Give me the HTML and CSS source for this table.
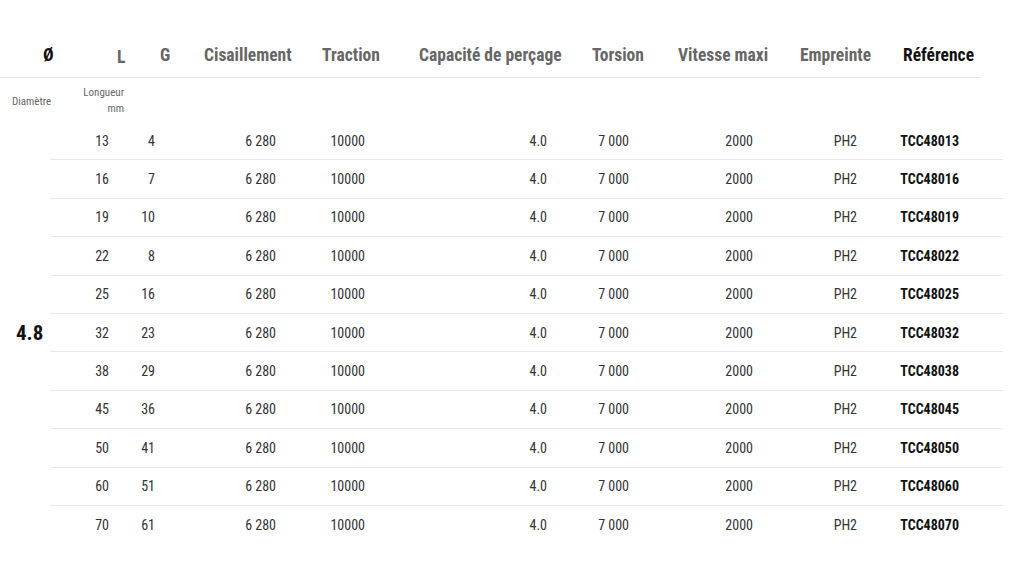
FILE: index.html
```html
<!DOCTYPE html>
<html lang="fr">
<head>
<meta charset="utf-8">
<link rel="stylesheet" href="styles.css">
</head>
<body>
<div class="page">
  <div class="head">
    <div class="h h-dia">Ø</div>
    <div class="h h-l">L</div>
    <div class="h">G</div>
    <div class="h">Cisaillement</div>
    <div class="h">Traction</div>
    <div class="h">Capacité de perçage</div>
    <div class="h">Torsion</div>
    <div class="h">Vitesse maxi</div>
    <div class="h">Empreinte</div>
    <div class="h h-ref">Référence</div>
  </div>
  <div class="body">
    <div class="sub-dia">Diamètre</div>
    <div class="sub-len">Longueur<br>mm</div>
    <div class="dia">4.8</div>
    <div class="rows">
      <div class="row"><span>13</span><span>4</span><span>6 280</span><span>10000</span><span>4.0</span><span>7 000</span><span>2000</span><span>PH2</span><span class="ref">TCC48013</span></div>
      <div class="row"><span>16</span><span>7</span><span>6 280</span><span>10000</span><span>4.0</span><span>7 000</span><span>2000</span><span>PH2</span><span class="ref">TCC48016</span></div>
      <div class="row"><span>19</span><span>10</span><span>6 280</span><span>10000</span><span>4.0</span><span>7 000</span><span>2000</span><span>PH2</span><span class="ref">TCC48019</span></div>
      <div class="row"><span>22</span><span>8</span><span>6 280</span><span>10000</span><span>4.0</span><span>7 000</span><span>2000</span><span>PH2</span><span class="ref">TCC48022</span></div>
      <div class="row"><span>25</span><span>16</span><span>6 280</span><span>10000</span><span>4.0</span><span>7 000</span><span>2000</span><span>PH2</span><span class="ref">TCC48025</span></div>
      <div class="row"><span>32</span><span>23</span><span>6 280</span><span>10000</span><span>4.0</span><span>7 000</span><span>2000</span><span>PH2</span><span class="ref">TCC48032</span></div>
      <div class="row"><span>38</span><span>29</span><span>6 280</span><span>10000</span><span>4.0</span><span>7 000</span><span>2000</span><span>PH2</span><span class="ref">TCC48038</span></div>
      <div class="row"><span>45</span><span>36</span><span>6 280</span><span>10000</span><span>4.0</span><span>7 000</span><span>2000</span><span>PH2</span><span class="ref">TCC48045</span></div>
      <div class="row"><span>50</span><span>41</span><span>6 280</span><span>10000</span><span>4.0</span><span>7 000</span><span>2000</span><span>PH2</span><span class="ref">TCC48050</span></div>
      <div class="row"><span>60</span><span>51</span><span>6 280</span><span>10000</span><span>4.0</span><span>7 000</span><span>2000</span><span>PH2</span><span class="ref">TCC48060</span></div>
      <div class="row"><span>70</span><span>61</span><span>6 280</span><span>10000</span><span>4.0</span><span>7 000</span><span>2000</span><span>PH2</span><span class="ref">TCC48070</span></div>
    </div>
  </div>
</div>
</body>
</html>
```
FILE: styles.css
```css
html, body {
  margin: 0;
  padding: 0;
  background: #ffffff;
}
body {
  font-family: "Roboto Condensed", "Liberation Sans Narrow", "Roboto", sans-serif;
  color: #333333;
}
.page {
  width: 1024px;
  padding-top: 32px;
}
.head {
  width: 980px;
  display: grid;
  grid-template-columns: 43px 74px 43px 44px 118px 97px 173px 86px 122px 103px 77px;
  align-items: center;
  height: 45px;
  border-bottom: 1px solid #e6e6e6;
  font-size: 17.5px;
  font-weight: 700;
  color: #666666;
}
.h { white-space: nowrap; }
.h-dia { grid-column: 2; color: #111111; }
.h-l { padding-top: 5px; }
.h-ref { color: #111111; }
.body {
  display: grid;
  grid-template-columns: 50px 953px;
  grid-template-rows: 44px auto;
}
.sub-dia {
  grid-column: 1;
  grid-row: 1;
  align-self: center;
  padding-left: 12px;
  padding-top: 2px;
  font-size: 11px;
  color: #666666;
  white-space: nowrap;
}
.sub-len {
  grid-column: 2;
  grid-row: 1;
  width: 74px;
  text-align: right;
  font-size: 11px;
  line-height: 16px;
  padding-top: 7px;
  color: #666666;
}
.dia {
  grid-column: 1;
  grid-row: 2;
  align-self: center;
  padding-left: 16px;
  font-size: 21px;
  font-weight: 700;
  color: #111111;
}
.rows {
  grid-column: 2;
  grid-row: 2;
}
.row {
  display: grid;
  grid-template-columns: 59px 46px 121px 89px 182px 82px 124px 104px 102px 44px;
  height: 38.4px;
  align-items: center;
  font-size: 14px;
  border-bottom: 1px solid #e8e8e8;
  box-sizing: border-box;
}
.row:last-child { border-bottom: none; }
.row span { text-align: right; white-space: nowrap; }
.row .ref { font-weight: 700; color: #111111; }
```
